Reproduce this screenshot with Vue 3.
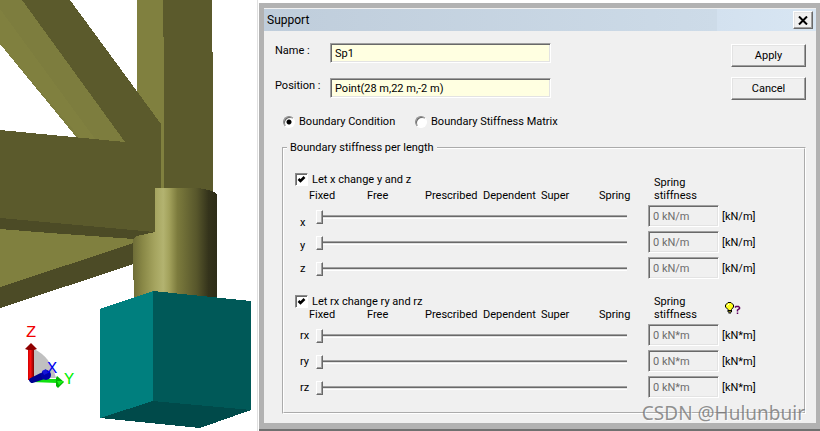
<template>
  <div class="workspace">
    <div class="scene">
      <svg class="model" viewBox="0 0 257 431" role="img" aria-label="Model view">
        <defs>
          <linearGradient id="pile" gradientUnits="userSpaceOnUse" x1="133" y1="0" x2="217" y2="0">
            <stop offset="0" stop-color="#6e6d37" />
            <stop offset="0.12" stop-color="#8a8947" />
            <stop offset="0.26" stop-color="#a5a45f" />
            <stop offset="0.36" stop-color="#b3b370" />
            <stop offset="0.43" stop-color="#a3a25c" />
            <stop offset="0.53" stop-color="#7c7b3d" />
            <stop offset="0.76" stop-color="#57562b" />
            <stop offset="0.9" stop-color="#34331b" />
            <stop offset="1" stop-color="#2e2d18" />
          </linearGradient>
          <linearGradient id="shaft" x1="0" y1="0" x2="1" y2="0">
            <stop offset="0" stop-color="#d00000" />
            <stop offset="0.4" stop-color="#ff1010" />
            <stop offset="1" stop-color="#800000" />
          </linearGradient>
        </defs>
        <g shape-rendering="crispEdges">
          <polygon points="0,5 22,0 130,148 82,144 0,44" fill="#7d7d3e" />
          <polygon points="0,0 22,0 125,142 100,142 0,9" fill="#7d7d3e" />
          <polygon points="0,9 98,143 85,143 0,44" fill="#80803f" />
          <polygon points="137,0 164,0 164,190 161,190 158,124 137,91" fill="#80803f" />
          <polygon points="163,0 212,0 212,52 213,52 213,194 164,194 164,37 163,37" fill="#5b5a2c" />
          <polygon points="0,225 50,228 134,236 134,264 0,308" fill="#4c4b26" />
          <polygon points="0,226 50,230 134,238 134,243 0,287" fill="#80803f" />
          <polygon points="0,214 155,228 155,234 134,239 50,233 0,229" fill="#4c4b26" />
          <polygon points="22,0 70,0 161,124 161,190 155,190 155,232 0,218 0,130 125,142" fill="#5b5a2c" />
          <path d="M133 239 L137 236 L155 232 V188 H198 L208 190 L214 192 L217 195 V300 H134 V280 H133 Z" fill="url(#pile)" />
          <polygon points="100,309 153,291 153,401 100,418" fill="#007f7e" />
          <polygon points="153,291 251,301 251,410 153,401" fill="#005958" />
          <polygon points="100,418 153,401 251,410 200,428" fill="#004a4a" />
        </g>
        <g class="triad">
          <path d="M34 349 Q51 357 56 378 H34 Z" fill="#c0c0c0" />
          <path d="M33 379 L57 379 V383 L32 382 Z" fill="#10e010" />
          <path d="M57 376 L64 382 L58 388 L56 386 V378 Z" fill="#00b400" />
          <path d="M57 381 H64 L59 385 Z" fill="#18f018" />
          <rect x="28" y="349" width="6" height="31" fill="url(#shaft)" />
          <path d="M31 343 L37 349 L34 350 H28 L25 349 Z" fill="#900000" />
          <path d="M31 380 L41 375 L44 377 L32 381 Z" fill="#000090" stroke="#000090" stroke-width="4" stroke-linejoin="round" />
          <circle cx="46" cy="375" r="5" fill="#0000a8" />
          <path d="M42 371 L46 369 L48 373 L44 375 Z" fill="#1414d8" />
          <text x="26" y="337" fill="#f00000">Z</text>
          <text x="47" y="373" fill="#0000f0">X</text>
          <text x="64" y="384" fill="#00f000">Y</text>
        </g>
      </svg>
    </div>

    <div class="dialog-wrap">
      <section class="dialog" role="dialog" aria-labelledby="dialog-title">
        <header class="title-bar">
          <h1 id="dialog-title">Support</h1>
          <button class="close" type="button" aria-label="Close">
            <svg width="10" height="9" viewBox="0 0 10 9">
              <path d="M1 0.5 L9 8.5 M9 0.5 L1 8.5" stroke="#000" stroke-width="2" />
            </svg>
          </button>
        </header>

        <form class="body" @submit.prevent>
          <div class="top">
            <div class="fields">
              <label for="name">Name :</label>
              <input id="name" v-model="name" class="text-box" type="text">
              <label for="position">Position :</label>
              <input id="position" v-model="position" class="text-box" type="text">
            </div>
            <div class="actions">
              <button class="btn" type="submit">Apply</button>
              <button class="btn" type="button">Cancel</button>
            </div>
          </div>

          <div class="modes">
            <label v-for="m in modes" :key="m.value" class="mode">
              <input v-model="mode" type="radio" name="mode" :value="m.value">
              <span>{{ m.label }}</span>
            </label>
          </div>

          <fieldset class="stiffness">
            <legend>Boundary stiffness per length</legend>
            <div class="groups">
              <div v-for="g in groups" :key="g.id" class="group" :class="g.id">
                <div class="head">
                  <label class="check">
                    <input v-model="g.linked" type="checkbox">
                    <span>{{ g.label }}</span>
                  </label>
                  <div class="scale">
                    <span v-for="s in scale" :key="s">{{ s }}</span>
                  </div>
                </div>
                <div class="spring-head">
                  <span>Spring<br>stiffness</span>
                  <svg v-if="g.hint" class="hint" width="16" height="13" viewBox="0 0 16 13">
                    <path d="M3 0.5 H6 L8.5 3 V5 L6.5 7.5 V10 H3 V7.5 L0.5 5 V3 Z" fill="#ffff20" stroke="#000" />
                    <path d="M3 8.5 H6.5 M3.5 11 H6" stroke="#000" />
                    <path d="M2.5 3.5 L4 2" stroke="#fff" />
                    <path d="M10 5.5 L11 4.5 H13.5 L14.5 5.5 V6.5 L12.5 8 V9.5 M12.5 10.5 V12" fill="none" stroke="#600060" stroke-width="1.5" />
                  </svg>
                </div>
                <div class="axes">
                  <label v-for="a in g.axes" :key="a.name" :for="'slide-' + a.name">{{ a.name }}</label>
                </div>
                <div class="sliders">
                  <input
                    v-for="a in g.axes"
                    :id="'slide-' + a.name"
                    :key="a.name"
                    v-model.number="a.level"
                    type="range"
                    min="0"
                    max="5"
                  >
                </div>
                <div class="values">
                  <label v-for="a in g.axes" :key="a.name" class="value">
                    <input class="text-box" type="text" :value="a.value + ' ' + g.unit" disabled>
                    <span>[{{ g.unit }}]</span>
                  </label>
                </div>
              </div>
            </div>
          </fieldset>
        </form>
      </section>
    </div>

    <div class="watermark">CSDN @Hulunbuir</div>
  </div>
</template>

<script setup>
import { ref } from 'vue'

const name = ref('Sp1')
const position = ref('Point(28 m,22 m,-2 m)')
const mode = ref('condition')

const modes = [
  { value: 'condition', label: 'Boundary Condition' },
  { value: 'matrix', label: 'Boundary Stiffness Matrix' }
]

const scale = ['Fixed', 'Free', 'Prescribed', 'Dependent', 'Super', 'Spring']

const makeAxes = (names) => names.map((n) => ({ name: n, level: 0, value: 0 }))

const groups = ref([
  {
    id: 'translation',
    label: 'Let x change y and z',
    unit: 'kN/m',
    linked: true,
    hint: false,
    axes: makeAxes(['x', 'y', 'z'])
  },
  {
    id: 'rotation',
    label: 'Let rx change ry and rz',
    unit: 'kN*m',
    linked: true,
    hint: true,
    axes: makeAxes(['rx', 'ry', 'rz'])
  }
])
</script>

<style>
body {
  margin: 0;
  background: #fff;
}
</style>

<style scoped>
* {
  box-sizing: border-box;
}

.workspace {
  position: relative;
  display: grid;
  grid-template-columns: 257fr 563fr;
  overflow: hidden;
  font-family: Tahoma, Roboto, sans-serif;
  font-size: 11px;
  line-height: 13px;
  color: #000;
}

.model {
  display: block;
  width: 100%;
  height: auto;
}

.triad text {
  font-family: "Liberation Mono", monospace;
  font-size: 17px;
}

.dialog-wrap {
  padding: 3px 0 0 1px;
  border-left: 1px solid #e0e0e0;
}

.dialog {
  border: solid #b2b2b2;
  border-width: 5px 4px 6px 5px;
  background: #f0f0f0;
  box-shadow: 0 2px 0 #707070;
  margin-bottom: 2px;
}

.title-bar {
  display: flex;
  align-items: center;
  justify-content: space-between;
  height: 23px;
  padding: 0 3px;
  border-top: 1px solid #f0f0f0;
  background: linear-gradient(90deg, #bfcddb, #cddbe8 82%, #d3e1ef 82%, #d8e6f3);
}

.title-bar h1 {
  margin: 0;
  font-size: 12px;
  font-weight: 400;
}

.btn,
.close {
  padding: 0;
  border: 1px solid;
  border-color: #fff #696969 #696969 #fff;
  background: #f0f0f0;
  box-shadow: inset -1px -1px #a0a0a0, inset 1px 1px #e3e3e3;
  font: inherit;
  color: inherit;
}

.close {
  display: flex;
  align-items: center;
  justify-content: center;
  width: 20px;
  height: 18px;
}

.body {
  padding: 12px 10px 9px 11px;
}

.top {
  display: flex;
  justify-content: space-between;
}

.fields {
  display: grid;
  grid-template-columns: 55px 221px;
  row-gap: 15px;
  align-content: start;
}

.fields label {
  padding-top: 1px;
}

.text-box {
  width: 100%;
  height: 20px;
  padding: 0 4px;
  border: 1px solid;
  border-color: #a0a0a0 #fff #fff #a0a0a0;
  border-radius: 0;
  background: #ffffe1;
  box-shadow: inset 1px 1px #696969, inset -1px -1px #e3e3e3;
  font: inherit;
  color: inherit;
}

.actions {
  display: flex;
  flex-direction: column;
  gap: 10px;
  padding-top: 1px;
}

.btn {
  width: 75px;
  height: 23px;
}

.modes {
  display: grid;
  grid-template-columns: 132px 1fr;
  margin-top: 15px;
  padding-left: 8px;
}

.mode,
.check {
  display: flex;
  align-items: center;
  gap: 4px;
}

input[type="radio"],
input[type="checkbox"] {
  appearance: none;
  width: 12px;
  height: 12px;
  margin: 0;
  border: 1px solid;
  border-color: #8a8a8a #fff #fff #8a8a8a;
  background: #fff;
  box-shadow: inset 1px 1px #696969;
}

input[type="radio"] {
  border-radius: 50%;
}

input[type="radio"]:checked {
  background: radial-gradient(circle, #000 2px, #fff 3px);
}

input[type="checkbox"] {
  width: 13px;
  height: 13px;
}

input[type="checkbox"]:checked {
  background: #fff url("data:image/svg+xml,%3Csvg xmlns='http://www.w3.org/2000/svg' viewBox='0 0 11 11'%3E%3Cpath d='M2.5 5 L4.5 7 L8.5 3' fill='none' stroke='black' stroke-width='2.5'/%3E%3C/svg%3E") center / 11px 11px no-repeat;
}

.stiffness {
  min-width: 0;
  margin: 13px 0 0 7px;
  padding: 0;
  border: 2px groove #fff;
}

.stiffness legend {
  margin-left: 3px;
  padding: 0 3px;
}

.groups {
  display: flex;
  flex-direction: column;
  gap: 16px;
  padding: 19px 0 14px 11px;
}

.group {
  display: grid;
  grid-template-columns: 21px 1fr 156px;
  row-gap: 3px;
}

.head {
  grid-column: 1 / 3;
  display: flex;
  flex-direction: column;
}

.translation .head {
  gap: 3px;
}

.scale {
  display: grid;
  grid-template-columns: repeat(5, minmax(0, 1fr)) 49px;
  padding-left: 14px;
  white-space: nowrap;
}

.spring-head {
  display: flex;
  align-items: center;
  align-self: end;
  gap: 28px;
  padding-left: 6px;
}

.axes {
  display: flex;
  flex-direction: column;
  gap: 13px;
  padding: 5px 0 0 5px;
}

.translation .axes {
  gap: 10px;
  padding-top: 11px;
}

.sliders {
  display: flex;
  flex-direction: column;
  gap: 4px;
  padding: 1px 21px 0 0;
  margin-bottom: -1px;
}

.sliders input {
  appearance: none;
  width: 100%;
  height: 22px;
  margin: 0;
  background: transparent;
}

.sliders input::-webkit-slider-runnable-track {
  height: 4px;
  border-top: 1px solid #a0a0a0;
  border-bottom: 1px solid #fff;
  background: linear-gradient(#696969 1px, #e3e3e3 1px);
}

.sliders input::-webkit-slider-thumb {
  appearance: none;
  width: 7px;
  height: 14px;
  margin-top: -6px;
  border: 1px solid;
  border-color: #fff #696969 #696969 #fff;
  background: #f0f0f0;
  box-shadow: inset -1px -1px #a0a0a0;
}

.values {
  display: flex;
  flex-direction: column;
  gap: 4px;
}

.value {
  display: grid;
  grid-template-columns: 71px 1fr;
  align-items: center;
  gap: 3px;
}

.value .text-box {
  height: 22px;
  background: #f0f0f0;
  color: #6d6d6d;
}

.watermark {
  position: absolute;
  right: 15px;
  bottom: 6px;
  font-family: "Noto Sans", sans-serif;
  font-size: 19px;
  line-height: 24px;
  color: rgba(110, 110, 110, 0.75);
  text-shadow: 1px 1px 0 rgba(255, 255, 255, 0.6);
  pointer-events: none;
}
</style>
